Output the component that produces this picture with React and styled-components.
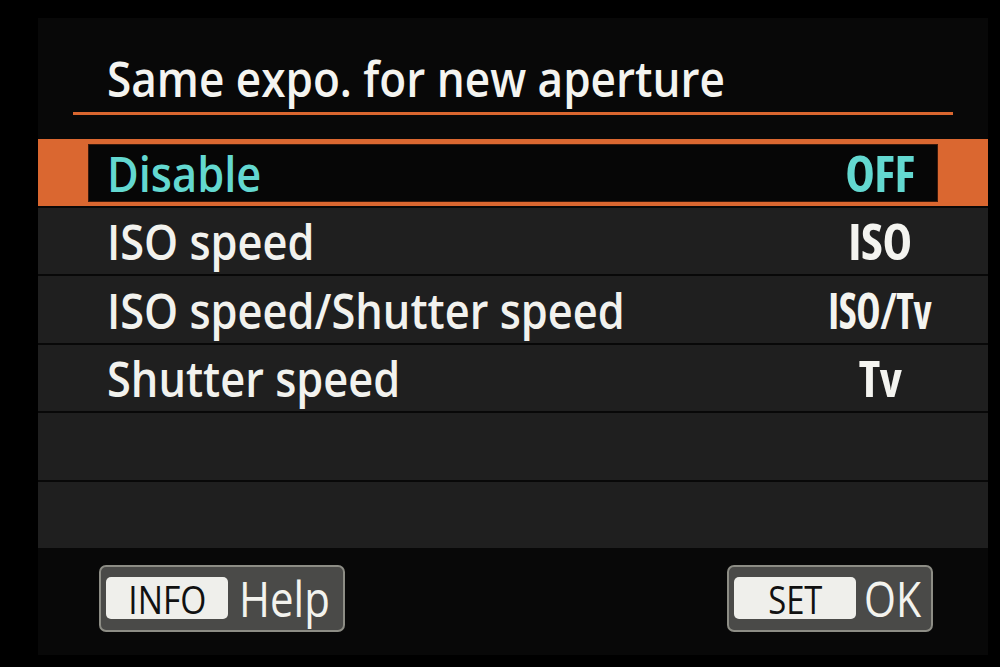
import React from "react";
import styled, { createGlobalStyle } from "styled-components";

const Global = createGlobalStyle`
  html, body { margin: 0; padding: 0; background: #000; }
  body { font-family: "Open Sans", "Noto Sans", "DejaVu Sans", sans-serif; }
`;

const Page = styled.div`
  width: 1000px;
  height: 667px;
  background: #000;
  box-sizing: border-box;
  padding: 18px 12px 12px 38px;
`;

const Screen = styled.div`
  width: 950px;
  height: 637px;
  background: #080808;
  display: flex;
  flex-direction: column;
`;

const Header = styled.div`
  padding: 35.5px 35px 0 35px;
`;

const Narrow = styled.span`
  display: inline-block;
  white-space: nowrap;
  transform: scaleX(${(p) => p.$scale});
  transform-origin: ${(p) => p.$origin || "left"} center;
`;

const Title = styled.h1`
  margin: 0 0 0 34px;
  font-size: 49px;
  line-height: 49px;
  font-weight: 600;
  color: #f4f4f0;
  white-space: nowrap;
`;

const Rule = styled.div`
  margin-top: 9.5px;
  height: 2.5px;
  background: #d9662f;
`;

const List = styled.div`
  margin-top: 24.5px;
  display: flex;
  flex-direction: column;
  gap: 2px;
`;

const Row = styled.div`
  height: 66.5px;
  background: ${(p) => (p.$selected ? "#da6730" : "#1f1f1f")};
  display: flex;
  box-sizing: border-box;
`;

const RowInner = styled.div`
  flex: 1;
  display: grid;
  grid-template-columns: 1fr 110px;
  align-items: center;
  box-sizing: border-box;
  ${(p) =>
    p.$selected
      ? `
    margin: 6px 51px 4.5px 51px;
    padding: 0 2px 0 18px;
    background: #060606;
    box-shadow: 0 0 0 1px #3a1a0c;
  `
      : `
    padding: 1px 53px 0 69px;
  `}
`;

const Label = styled.span`
  font-size: 49px;
  line-height: 56px;
  font-weight: 600;
  color: ${(p) => (p.$selected ? "#63d8d0" : "#f2f2ee")};
  white-space: nowrap;
`;

const Value = styled.span`
  justify-self: center;
  font-size: 50px;
  line-height: 56px;
  font-weight: 700;
  font-stretch: 75%;
  letter-spacing: -0.5px;
  color: ${(p) => (p.$selected ? "#63d8d0" : "#f4f4f0")};
  white-space: nowrap;
  display: inline-block;
  transform: scaleX(${(p) => p.$squeeze || 1});
`;

const Footer = styled.div`
  flex: 1;
  display: flex;
  justify-content: space-between;
  align-items: flex-start;
  padding: 16.5px 55px 0 61px;
`;

const Button = styled.div`
  width: ${(p) => p.$width}px;
  height: 67px;
  box-sizing: border-box;
  border: 2px solid #8d8d85;
  border-radius: 7px;
  background: #4a4a48;
  display: flex;
  align-items: center;
  padding: 0 0 0 5px;
  gap: ${(p) => p.$gap}px;
`;

const Key = styled.span`
  width: 122px;
  height: 42px;
  flex: none;
  border-radius: 5px;
  background: #efefeb;
  color: #111;
  display: flex;
  align-items: center;
  justify-content: center;
  font-size: 39px;
  line-height: 39px;
  font-weight: 500;
  padding-top: 1px;
  box-sizing: border-box;
`;

const Action = styled.span`
  font-size: 50px;
  line-height: 50px;
  font-weight: 500;
  color: #f3f3ee;
  white-space: nowrap;
`;

const items = [
  { label: "Disable", value: "OFF", selected: true },
  { label: "ISO speed", value: "ISO" },
  { label: "ISO speed/Shutter speed", value: "ISO/Tv", squeeze: 0.82 },
  { label: "Shutter speed", value: "Tv" },
  { label: "", value: "" },
  { label: "", value: "" },
];

export default function App() {
  return (
    <>
      <Global />
      <Page>
        <Screen>
          <Header>
            <Title>
              <Narrow $scale={0.9}>Same expo. for new aperture</Narrow>
            </Title>
            <Rule />
          </Header>
          <List>
            {items.map((it, i) => (
              <Row key={i} $selected={it.selected}>
                <RowInner $selected={it.selected}>
                  <Label $selected={it.selected}>
                    <Narrow $scale={0.885}>{it.label}</Narrow>
                  </Label>
                  <Value $selected={it.selected} $squeeze={it.squeeze}>
                    {it.value}
                  </Value>
                </RowInner>
              </Row>
            ))}
          </List>
          <Footer>
            <Button $width={246} $gap={11}>
              <Key>
                <Narrow $scale={0.86} $origin="center">INFO</Narrow>
              </Key>
              <Action>
                <Narrow $scale={0.84}>Help</Narrow>
              </Action>
            </Button>
            <Button $width={206} $gap={8}>
              <Key>
                <Narrow $scale={0.84} $origin="center">SET</Narrow>
              </Key>
              <Action>
                <Narrow $scale={0.82}>OK</Narrow>
              </Action>
            </Button>
          </Footer>
        </Screen>
      </Page>
    </>
  );
}
